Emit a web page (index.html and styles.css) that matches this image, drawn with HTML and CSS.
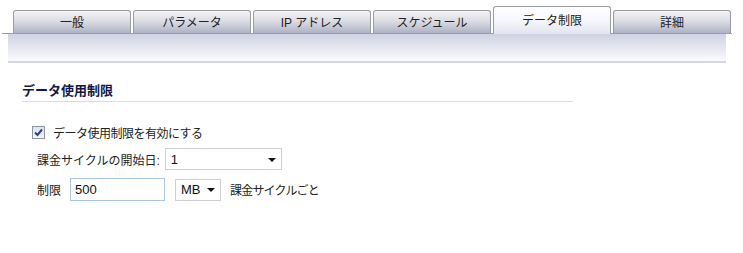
FILE: index.html
```html
<!DOCTYPE html>
<html lang="ja">
<head>
<meta charset="utf-8">
<link rel="stylesheet" href="styles.css">
</head>
<body>
<div class="tabbar">
  <div class="tab">一般</div>
  <div class="tab">パラメータ</div>
  <div class="tab">IP アドレス</div>
  <div class="tab">スケジュール</div>
  <div class="tab active">データ制限</div>
  <div class="tab">詳細</div>
</div>
<div class="band"></div>
<div class="section">
  <div class="heading">データ使用制限</div>
  <label class="check-row">
    <span class="checkbox"><svg width="9" height="9" viewBox="0 0 9 9"><path d="M1 4.5 L3.5 7 L8 1.5" fill="none" stroke="#2a3d9a" stroke-width="2"/></svg></span>
    <span class="tight">データ使用制限を有効にする</span>
  </label>
  <div class="form-row row1">
    <span class="lbl">課金サイクルの開始日:</span>
    <div class="select wide"><span>1</span><span class="arrow"></span></div>
  </div>
  <div class="form-row row2">
    <span class="lbl first">制限</span>
    <div class="input">500</div>
    <div class="select small"><span>MB</span><span class="arrow"></span></div>
    <span class="lbl tighter">課金サイクルごと</span>
  </div>
</div>
</body>
</html>
```
FILE: styles.css
```css
html, body {
  margin: 0;
  padding: 0;
  background: #ffffff;
}
body {
  font-family: "Liberation Sans", "Noto Sans CJK JP", sans-serif;
  font-size: 12px;
  color: #222222;
}
.tabbar {
  display: flex;
  align-items: flex-end;
  gap: 2px;
  margin-left: 2px;
  width: 730px;
  height: 34px;
  padding-left: 11px;
  box-sizing: border-box;
  border-bottom: 1px solid #9c9ea6;
}
.tab {
  width: 118px;
  height: 23px;
  box-sizing: border-box;
  border: 1px solid #9a9ca4;
  border-bottom: none;
  border-radius: 3px 3px 0 0;
  background: linear-gradient(#f4f4f6, #dcdde4 45%, #aeb2c6);
  display: flex;
  align-items: center;
  justify-content: center;
  color: #222;
  font-size: 12px;
  padding-bottom: 2px;
}
.tab.active {
  height: 28px;
  margin-bottom: -1px;
  background: linear-gradient(#ffffff, #f6f7fb 50%, #e2e4ef);
  padding-bottom: 3px;
}
.band {
  margin-left: 8px;
  width: 718px;
  height: 27px;
  background: linear-gradient(#cfd2e2, #fbfbfe);
  border-bottom: 2px solid #d5d7e6;
}
.section {
  padding: 20px 0 0 22px;
}
.heading {
  width: 551px;
  font-weight: bold;
  font-size: 13px;
  color: #10184a;
  padding-bottom: 3px;
  border-bottom: 1px solid #dcdcdc;
  line-height: 15px;
}
.check-row {
  display: flex;
  align-items: center;
  gap: 8px;
  margin-top: 22px;
  margin-left: 10px;
  height: 16px;
}
.tight {
  letter-spacing: -0.5px;
}
.tighter {
  letter-spacing: -0.8px;
}
.checkbox {
  width: 11px;
  height: 11px;
  border: 1px solid #8d95a8;
  background: linear-gradient(#dfe3ea, #f6f7f9);
  display: flex;
  align-items: center;
  justify-content: center;
}
.form-row {
  display: flex;
  align-items: center;
  margin-left: 15px;
}
.row1 {
  margin-top: 8px;
  gap: 5px;
}
.row2 {
  margin-top: 8px;
  gap: 0;
}
.lbl.first {
  margin-right: 9px;
}
.select {
  height: 22px;
  box-sizing: border-box;
  border: 1px solid #cfcfcf;
  background: #fff;
  display: flex;
  align-items: center;
  justify-content: space-between;
  padding: 0 5px 0 5px;
  font-size: 13px;
  color: #111;
}
.select.wide {
  width: 117px;
}
.select.small {
  width: 46px;
  margin-left: 10px;
  margin-right: 9px;
}
.arrow {
  width: 0;
  height: 0;
  border-left: 4px solid transparent;
  border-right: 4px solid transparent;
  border-top: 4px solid #111;
  margin-top: 1px;
}
.input {
  width: 95px;
  height: 23px;
  box-sizing: border-box;
  border: 1px solid #a9c6e4;
  background: #fff;
  padding: 0 4px;
  display: flex;
  align-items: center;
  font-size: 13px;
  color: #111;
}
```
